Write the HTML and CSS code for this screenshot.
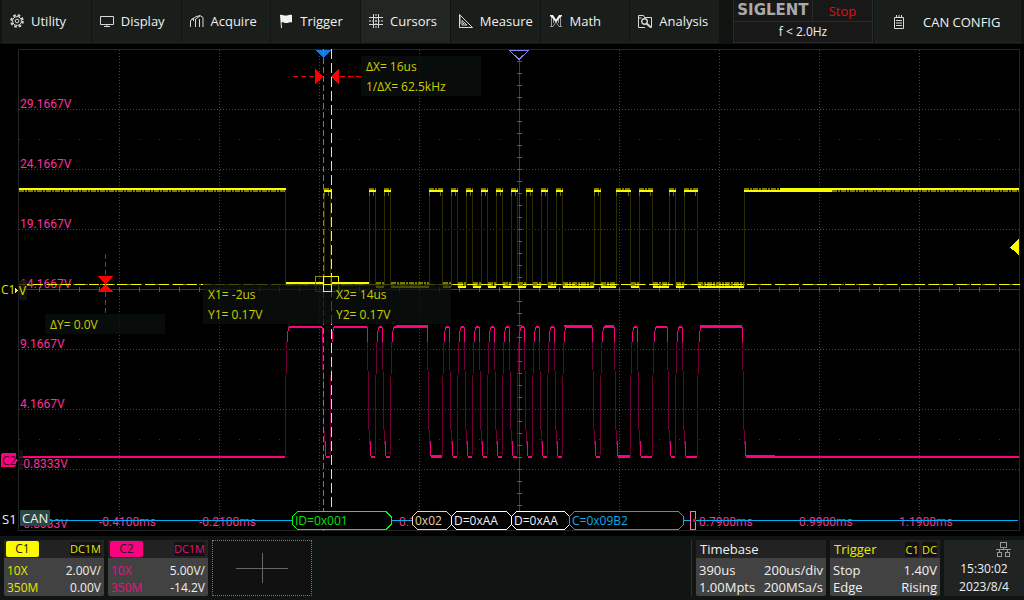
FILE: index.html
```html
<!DOCTYPE html>
<html lang="en">
<head>
<meta charset="UTF-8">
<meta name="viewport" content="width=device-width, initial-scale=1.0">
<title>Oscilloscope - CAN decode</title>
<link rel="stylesheet" href="styles.css">
</head>
<body>
<header class="topbar">
  <nav class="menu">
    <button class="menu-item">
      <svg class="icon" viewBox="0 0 14 14"><circle cx="7" cy="7" r="5.8" stroke-width="2" stroke-dasharray="2.6 1.95"/><circle cx="7" cy="7" r="4.4"/><circle cx="7" cy="7" r="1.8"/></svg>
      Utility
    </button>
    <button class="menu-item">
      <svg class="icon" viewBox="0 0 14 14"><path d="M.5 2.500h13v8H.5zM7 10.500v2M4 12.500h6"/></svg>
      Display
    </button>
    <button class="menu-item">
      <svg class="icon" viewBox="0 0 14 14"><path d="M.5 13V6.500L3 4.500M3.500 4v3M1 6l6-4M5.500 13V5L10 2M9.500 13V5M10 1.500l3 2V13M7 2.500l3-1"/></svg>
      Acquire
    </button>
    <button class="menu-item">
      <svg class="icon" viewBox="0 0 14 14"><path class="solid" d="M1 1c2-1 4 .8 6 .6S10 0 13 1v7.500c-2-.8-4 .6-6 .5S4 7.500 2.500 8.500L3 14H2z"/></svg>
      Trigger
    </button>
    <button class="menu-item active">
      <svg class="icon" viewBox="0 0 14 14"><path d="M0 3.500h14M0 10.500h14M4.500 0v14M9.500 0v14"/><path d="M0 7h14M7 0v14" stroke-dasharray="2 1"/></svg>
      Cursors
    </button>
    <button class="menu-item">
      <svg class="icon" viewBox="0 0 14 14"><path d="M.5.5v13h13zM3 6.500v4.500h5zM4.500 9v1M1 3h1M1 5h1M1 7h1M1 9h1"/></svg>
      Measure
    </button>
    <button class="menu-item">
      <svg class="icon" viewBox="0 0 14 14"><path class="grey" d="M2.500 2v11M11.500 2v11M4.500 4v5M9.500 4v5M1 12.500h3L7 8l3 4.500h3"/><path class="solid" d="M1 1h3l3 4.500L10 1h3v1.500h-1L7 8.500 2 2.500H1z"/></svg>
      Math
    </button>
    <button class="menu-item">
      <svg class="icon" viewBox="0 0 14 14"><path d="M7 13.500H.5V1.500h5l1 2h7v10H12M.5 4h3"/><circle cx="6.500" cy="7.500" r="2.800" stroke-width="1.400"/><path stroke-width="2" d="M8.500 9.500l4 3.500"/></svg>
      Analysis
    </button>
  </nav>
  <div class="status">
    <div class="brand">SIGLENT</div>
    <div class="run-state">Stop</div>
    <div class="freq">f &lt; 2.0Hz</div>
  </div>
  <button class="menu-item config">
    <svg class="icon" viewBox="0 0 14 14"><path d="M2.500 2.500h9v11h-9zM4.500 0v3M7 0v3M9.500 0v3M4 5.500h6M4 8h6M4 10.500h6"/></svg>
    CAN CONFIG
  </button>
</header>

<main class="scope">
  <svg class="plot" viewBox="0 44 1024 492">
    <!-- graticule -->
    <g class="grid">
      <rect class="frame" x="18.500" y="49.500" width="1001" height="481"/>
      <path class="dots" d="M119.500 50V530M219.500 50V530M319.500 50V530M419.500 50V530M619.500 50V530M719.500 50V530M819.500 50V530M919.500 50V530"/>
      <path class="dots" d="M19 109.500H1019M19 169.500H1019M19 229.500H1019M19 349.500H1019M19 409.500H1019M19 469.500H1019"/>
      <path class="sparse" d="M19 139.500H1019M19 439.500H1019"/>
      <path class="axis" d="M19 289.500H1019M519.500 50V530"/>
      <path class="ticks-x" d="M19 289.500H1019"/>
      <path class="ticks-y" d="M519.500 61V530"/>
    </g>

    <!-- axis labels -->
    <g class="axis-label">
      <text x="20" y="108">29.1667V</text>
      <text x="20" y="168">24.1667V</text>
      <text x="20" y="228">19.1667V</text>
      <text x="20" y="288">14.1667V</text>
      <text x="20" y="348">9.1667V</text>
      <text x="20" y="408">4.1667V</text>
      <text x="20" y="468">-0.8333V</text>
      <text x="20" y="528">-5.8333V</text>
      <text x="99" y="526">-0.4100ms</text>
      <text x="199" y="526">-0.2100ms</text>
      <text x="399" y="526">0.1</text>
      <text x="699" y="526">0.7900ms</text>
      <text x="799" y="526">0.9900ms</text>
      <text x="899" y="526">1.1900ms</text>
    </g>

    <!-- filled in by scope.js -->
    <g id="traceC1" class="trace c1"></g>
    <g id="traceC2" class="trace c2"></g>

    <!-- cursors -->
    <polygon class="trig-pos" points="315,50 332,50 323.500,58"/>
    <polygon class="trig-delay" points="509.500,50.500 528.500,50.500 519,59.500"/>
    <g class="cursor">
      <path class="x1" d="M323.500 49V531"/>
      <path class="x2" d="M331.500 49V507"/>
      <path class="y1" d="M19 284.500H1020"/>
      <path class="y2" d="M19 284.500H1020"/>
      <rect class="x1-box" x="315.500" y="276.500" width="16" height="15"/>
      <rect class="x2-box" x="323.500" y="276.500" width="15" height="15"/>
    </g>
    <g class="delta">
      <path d="M293 76.500H315M361 76.500H339M105.500 254V276M105.500 313V292"/>
      <polygon points="315,69 323,76.500 315,84"/>
      <polygon points="339,69 331,76.500 339,84"/>
      <polygon points="98,276 113,276 105.500,284"/>
      <polygon points="98,292 113,292 105.500,284"/>
    </g>

    <g class="readout">
      <rect x="361" y="56" width="120" height="40"/>
      <text x="366" y="71">ΔX= 16us</text>
      <text x="366" y="91">1/ΔX= 62.5kHz</text>
      <rect x="45" y="314" width="120" height="20"/>
      <text x="50" y="329">ΔY= 0.0V</text>
      <rect x="203" y="284" width="248" height="40"/>
      <text x="208" y="299">X1= -2us</text>
      <text x="208" y="319">Y1= 0.17V</text>
      <text x="336" y="299">X2= 14us</text>
      <text x="336" y="319">Y2= 0.17V</text>
    </g>
    <path class="cursor-cross" d="M323.500 284V291.500H331.500V284M323 284.500H331"/>

    <!-- channel markers -->
    <rect class="marker-shade" x="18" y="280" width="9" height="20"/>
    <text class="mark-c1" x="1" y="294">C1</text>
    <polygon class="arrow-c1" points="15,287 18,290.500 15,294"/>
    <text class="mark-c1" x="19" y="295">V</text>
    <rect class="marker-shade" x="18" y="450" width="5" height="20"/>
    <rect class="tag-c2" x="1" y="453" width="15" height="14" rx="2"/>
    <polygon class="arrow-c2" points="15,457 18,460.500 15,464"/>
    <text class="mark-c2" x="2" y="465">C2</text>
    <polygon class="level" points="1010,247.500 1019,239 1019,255"/>

    <!-- decoded bus -->
    <g class="bus">
      <path class="wire" d="M50 520.500H1018"/>
      <text class="bus-name" x="2" y="524">S1</text>
      <rect class="bus-type" x="20" y="510" width="30" height="16"/>
      <text class="bus-name" x="22" y="523">CAN</text>
      <path class="id" d="M297.500 511.500H386L391 516.500V524.500L386 529.500H297.500L292.500 524.500V516.500z"/>
      <text class="id-text" x="295" y="525">ID=0x001</text>
      <path class="dlc" d="M417.500 511.500H446.500L451.500 516.500V524.500L446.500 529.500H417.500L412.500 524.500V516.500z"/>
      <text class="dlc-text" x="415" y="525">0x02</text>
      <path class="data" d="M456.500 511.500H506.500L511.500 516.500V524.500L506.500 529.500H456.500L451.500 524.500V516.500z"/>
      <text class="data-text" x="454" y="525">D=0xAA</text>
      <path class="data" d="M516.500 511.500H564.500L569.500 516.500V524.500L564.500 529.500H516.500L511.500 524.500V516.500z"/>
      <text class="data-text" x="514" y="525">D=0xAA</text>
      <path class="crc" d="M574.500 511.500H678.500L683.500 516.500V524.500L678.500 529.500H574.500L569.500 524.500V516.500z"/>
      <text class="crc-text" x="572" y="525">C=0x09B2</text>
      <rect class="ack" x="690.500" y="511.500" width="5" height="18"/>
      <rect class="ack-dot" x="693" y="519" width="3" height="3"/>
    </g>
  </svg>
</main>

<footer class="bottombar">
  <section class="card channel ch1">
    <div class="card-head"><span class="tag">C1</span><span class="coupling">DC1M</span></div>
    <div class="card-row"><span class="tint">10X</span><span>2.00V/</span></div>
    <div class="card-row"><span class="tint">350M</span><span>0.00V</span></div>
  </section>
  <section class="card channel ch2">
    <div class="card-head"><span class="tag">C2</span><span class="coupling">DC1M</span></div>
    <div class="card-row"><span class="tint">10X</span><span>5.00V/</span></div>
    <div class="card-row"><span class="tint">350M</span><span>-14.2V</span></div>
  </section>
  <button class="add" aria-label="Add">
    <svg class="plus" viewBox="0 0 52 30"><path d="M0 15.500h52M26.500 0v30"/></svg>
  </button>
  <div class="spacer"></div>
  <section class="card timebase">
    <div class="card-head">Timebase</div>
    <div class="card-row"><span>390us</span><span>200us/div</span></div>
    <div class="card-row"><span>1.00Mpts</span><span>200MSa/s</span></div>
  </section>
  <section class="card trigger">
    <div class="card-head"><span class="title">Trigger</span><span><span class="coupling">C1</span> <span class="coupling">DC</span></span></div>
    <div class="card-row"><span>Stop</span><span>1.40V</span></div>
    <div class="card-row"><span>Edge</span><span>Rising</span></div>
  </section>
  <section class="clock">
    <svg class="lan" viewBox="0 0 15 15"><path d="M4.500.5h6v5h-6zM1.500 10.500h4v4h-4zM9.500 10.500h4v4h-4zM7.500 5.500v2M0 7.500h15M3.500 7.500v3M11.500 7.500v3"/></svg>
    <time>15:30:02</time>
    <time>2023/8/4</time>
  </section>
</footer>
<script src="scope.js"></script>
</body>
</html>
```

FILE: styles.css
```css
body {
  margin: 0;
  min-height: 100vh;
  display: flex;
  flex-direction: column;
  background-color: #000;
  color: #f0f0f0;
  font-family: "Open Sans", "Noto Sans", sans-serif;
  font-size: 13px;
  line-height: 20px;
}

button {
  font: inherit;
  color: inherit;
  border: 0;
  padding: 0;
  background: none;
  text-align: left;
}

/* Top bar */
.topbar {
  display: grid;
  grid-template-columns: 730fr 140fr 148fr;
  column-gap: 1px;
  padding: 0 2px 1px;
  background-color: #0f1411;
}

.menu {
  display: grid;
  grid-template-columns: repeat(8, 1fr);
  margin-right: 12px;
}

.menu-item {
  display: flex;
  align-items: center;
  gap: 7px;
  padding: 11px 0 11px 8px;
  background-color: #191e1b;
  border-right: 1px solid #0f1411;
  border-bottom: 1px solid #222724;
  white-space: nowrap;
}

.menu-item.active {
  background-color: #212623;
}

.icon {
  width: 14px;
  height: 14px;
  flex: none;
  fill: none;
  stroke: #d8d8d8;
}

.icon .solid {
  fill: #f0f0f0;
  stroke: none;
}

.icon .grey {
  stroke: #999;
}

.status {
  display: grid;
  grid-template-columns: 79fr 60fr;
  align-self: start;
  gap: 1px;
  border: 1px solid #2a2b2a;
  border-top: 0;
  background-color: #2a2b2a;
  text-align: center;
}

.status > div {
  background-color: #181818;
}

.brand {
  color: #aaa;
  font-family: "DejaVu Sans", sans-serif;
  font-size: 15px;
  font-weight: bold;
}

.status .run-state {
  color: #e01010;
  padding-top: 1px;
}

.status .freq {
  grid-column: 1 / 3;
  font-size: 12px;
}

.config {
  padding: 12px 0 10px 18px;
  gap: 17px;
}

/* Plot */
.scope {
  flex: 1;
}

.plot {
  display: block;
  width: 100%;
  shape-rendering: crispEdges;
  font-size: 12px;
}

.grid path, .cursor path, .cursor rect, .frame {
  fill: none;
}

.frame {
  stroke: #262626;
}

.dots {
  stroke: #444;
  stroke-dasharray: 1 2;
}

.sparse {
  stroke: #3a3a3a;
  stroke-dasharray: 1 19;
}

.axis {
  stroke: #3c3c3c;
}

.ticks-x {
  stroke: #5a5a5a;
  stroke-width: 5;
  stroke-dasharray: 1 19;
}

.ticks-y {
  stroke: #5a5a5a;
  stroke-width: 5;
  stroke-dasharray: 1 11;
}

.axis-label {
  fill: #ff2f9c;
  font-family: Roboto, sans-serif;
  font-size: 12px;
}

.trace path {
  fill: none;
}

.c1 .edge { stroke: #2c2c00; }
.c1 .level-line { stroke: #fbfb00; stroke-width: 2; }
.c1 .noise { stroke: #7c7c00; stroke-width: 2; stroke-dasharray: 5 1 2 1; }
.c1 .spur { stroke: #6a6a00; }
.c2 .edge { stroke: #6a0036; }
.c2 .level-line { stroke: #ff0080; stroke-width: 2; }
.c2 .corner { stroke: #f0007a; }

.trig-pos { fill: #1678dc; }

.trig-delay {
  fill: #000;
  stroke: #8a86f0;
}

.cursor .x1 { stroke: #8c8800; stroke-dasharray: 6 3; }
.cursor .x2 { stroke: #fbfb00; stroke-dasharray: 10 4; }
.cursor .y1 { stroke: #8c8800; stroke-dasharray: 6 3; }
.cursor .y2 { stroke: #fbfb00; stroke-dasharray: 10 4; }
.cursor .x1-box { stroke: #8c8800; }
.cursor .x2-box { stroke: #fbfb00; }

.cursor-cross {
  fill: none;
  stroke: #fbfb00;
}

.delta {
  fill: #f00;
}

.delta path {
  fill: none;
  stroke: #f00;
  stroke-dasharray: 5 3;
}

.readout rect {
  fill: #0b100d;
  fill-opacity: 0.75;
}

.readout text {
  fill: #cdcd00;
}

.marker-shade {
  fill: #151515;
  fill-opacity: 0.8;
}

.mark-c1 { fill: #d8e000; }
.arrow-c1, .level { fill: #fbfb00; }
.tag-c2, .arrow-c2 { fill: #ff0080; }
.mark-c2 { fill: #4a0025; }

/* Decoded bus */
.wire { stroke: #00b0f0; }
.bus-name { fill: #f0f0f0; font-size: 13px; }
.bus-type { fill: #284846; }
.id, .dlc, .data, .crc { fill: #000; }
.id { stroke: #0f0; }
.id-text { fill: #00e000; }
.dlc { stroke: #f0cfa0; }
.dlc-text { fill: #e6d0ac; }
.data { stroke: #fff; }
.data-text { fill: #f0f0f0; }
.crc { stroke: #00b0f0; }
.crc-text { fill: #10a8e8; }
.ack { fill: #000; stroke: #ff6fb8; }
.ack-dot { fill: #f00; }

/* Bottom bar */
.bottombar {
  display: flex;
  gap: 4px;
  padding: 4px 0 4px 4px;
  background-color: #101412;
}

.card {
  flex: 0 1 100px;
  border-radius: 2px;
  background-color: #424242;
  overflow: hidden;
}

.card-head,
.card-row {
  display: flex;
  justify-content: space-between;
  align-items: center;
  padding: 0 3px;
  white-space: nowrap;
}

.card-head {
  height: 18px;
  margin-bottom: 4px;
  padding: 0 3px 0 4px;
  background-color: #222;
}

.card-row {
  line-height: 17px;
}

.channel {
  font-size: 12px;
}

.channel .card-head {
  padding: 0 3px 0 2px;
}

.tag {
  width: 33px;
  line-height: 16px;
  border-radius: 2px;
  color: #222;
  text-align: center;
}

.coupling {
  background-color: #111;
  font-size: 11px;
  line-height: 14px;
  border-radius: 2px;
}

.ch1 .tag { background-color: #fbfb00; }
.ch1 .tint, .ch1 .coupling { color: #e4e800; }
.ch2 .tag { background-color: #ff0080; }
.ch2 .tint, .ch2 .coupling { color: #e8107c; }

.add {
  flex: 0 1 100px;
  display: flex;
  justify-content: center;
  align-items: center;
  box-sizing: border-box;
  border: 1px dotted #777;
  background-color: #111;
}

.plus {
  width: 52px;
  height: 30px;
  fill: none;
  stroke: #666;
  shape-rendering: crispEdges;
}

.spacer {
  flex: 1;
  border-right: 1px solid #2c302e;
}

.timebase {
  flex-basis: 130px;
}

.trigger {
  flex-basis: 110px;
}

.trigger .title,
.trigger .coupling {
  color: #e8ec00;
}

.clock {
  flex: 0 1 80px;
  display: flex;
  flex-direction: column;
  align-items: center;
  background-color: #1f2321;
  font-size: 12px;
  line-height: 18px;
}

.lan {
  width: 15px;
  height: 15px;
  margin: 2px 0 3px 38px;
  fill: none;
  stroke: #999;
  shape-rendering: crispEdges;
}
```

FILE: scope.js
```js
// [rise, fall] x positions of the C1 pulses, C2 is the inverse
const pulses = [
  [324, 331], [369, 376], [384, 391], [429, 443], [451, 458], [466, 473],
  [481, 488], [496, 503], [511, 518], [526, 533], [541, 548], [556, 563],
  [594, 601], [616, 631], [639, 653], [669, 676], [684, 698]
];
const first = 286;
const last = 744;
const end = 1019;

function add(id, cls, d) {
  const path = document.createElementNS('http://www.w3.org/2000/svg', 'path');
  path.setAttribute('class', cls);
  path.setAttribute('d', d);
  document.getElementById(id).appendChild(path);
}

function drawC1() {
  let edges = `M${first - 0.5} 190V284`;
  let noise = `M19 191H${first}`;
  let lines = `M19 189H${first}`;
  let spurs = '';
  let x = first;
  pulses.forEach(([rise, fall]) => {
    edges += `M${rise + 0.5} 190V287M${fall - 0.5} 190V287`;
    spurs += `M${rise + 0.5} 191V196M${fall - 2.5} 191V196`;
    noise += `M${rise} 189H${fall}`;
    lines += `M${rise} 191H${fall}`;
    if (x < 340) {
      lines += `M${x} 283H${rise}`;
      noise += `M${x} 285H${rise}`;
    } else {
      lines += `M${x} 287H${rise}`;
      noise += `M${x} 283H${rise}M${x} 285H${rise}`;
    }
    x = fall;
  });
  edges += `M${last + 0.5} 190V287`;
  lines += `M${x} 287H${last}M${last} 191H832M780 189H${end}`;
  noise += `M${x} 283H${last}M${x} 285H${last}M${last} 189H780M832 191H${end}`;
  add('traceC1', 'edge', edges);
  add('traceC1', 'noise', noise);
  add('traceC1', 'spur', spurs);
  add('traceC1', 'level-line', lines);
}

function drawC2() {
  let edges = '';
  let corners = '';
  let lines = `M19 457H${first - 1}`;
  let x = first;
  const falls = pulses.concat([[last, end]]);
  falls.forEach(([rise, fall]) => {
    // up at x, down again at the next C1 rise
    edges += `M${x - 1} 457L${x} 375L${x + 1} 342`;
    corners += `M${x + 1} 342L${x + 1} 335L${x + 3} 327`;
    lines += `M${x + 3} 327H${rise - 2}`;
    edges += `M${rise - 2} 327L${rise - 1} 370L${rise} 430L${rise + 1} 445`;
    corners += `M${rise - 2} 327V342M${rise + 1} 441V450L${rise + 2} 456`;
    lines += `M${rise + 2} 457H${fall === end ? end : fall - 1}`;
    x = fall;
  });
  // thicker where the samples pile up
  lines += 'M396 326H428M564 326H592M605 326H614M700 326H742M431 456H442M618 456H630M746 456H775';
  add('traceC2', 'edge', edges);
  add('traceC2', 'corner', corners);
  add('traceC2', 'level-line', lines);
}

drawC1();
drawC2();
```
